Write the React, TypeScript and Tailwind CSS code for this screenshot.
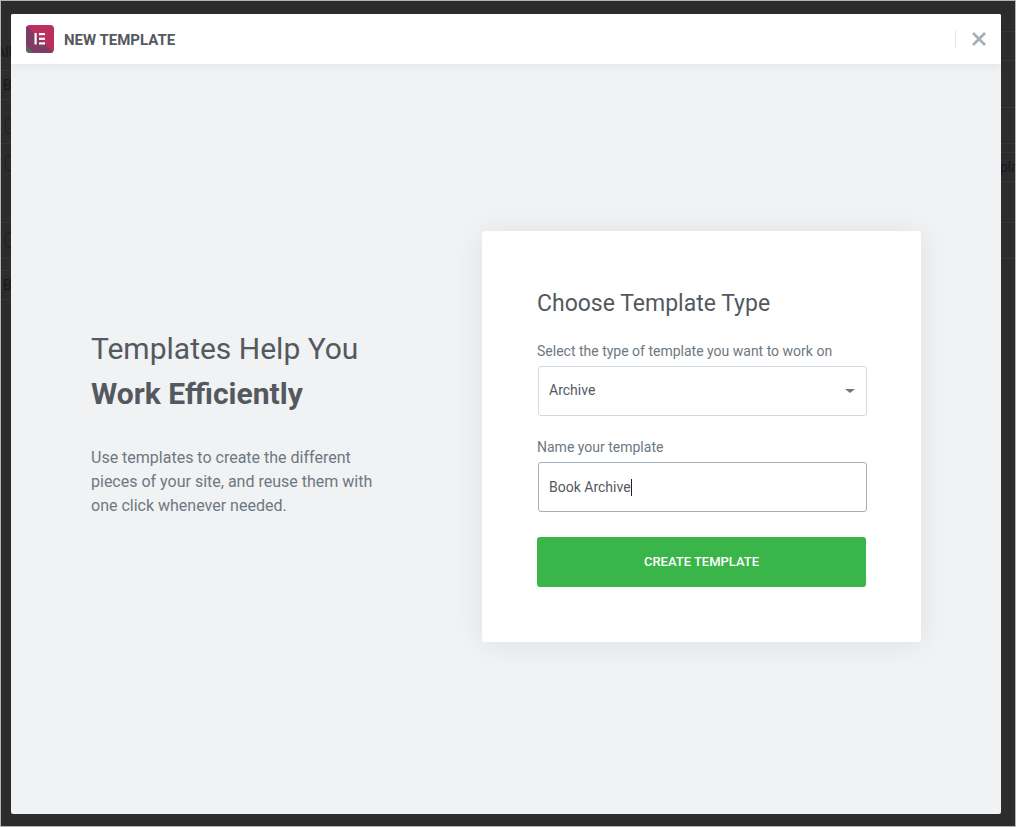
function Row({ h, line = "border-[#3d3226]", className = "", children }: { h: string; line?: string; className?: string; children?: React.ReactNode }) {
  return <div className={`${h} ${line} ${className} border-b flex shrink-0 whitespace-nowrap`}>{children}</div>;
}

function Check() {
  return <span className="block w-[16px] h-[16px] rounded-[3px] border border-[#1f1f1f]" />;
}

function Backdrop() {
  const soft = "border-[#353535]";
  return (
    <div aria-hidden="true" className="absolute inset-0 flex justify-between text-[#17181a] text-[14px]">
      <div className="w-[12px] overflow-hidden flex flex-col">
        <Row h="h-[70px]" className="items-end pb-[7px] -ml-[5px]">All</Row>
        <Row h="h-[29px]" className="items-center pl-[2px]">B</Row>
        <Row h="h-[44px]" line={soft} className="pt-[18px] pl-[4px]"><Check /></Row>
        <Row h="h-[79px]" line={soft} className="pt-[11px] pl-[4px]"><Check /></Row>
        <Row h="h-[36px]" line={soft} className="pt-[9px] pl-[4px]"><Check /></Row>
        <Row h="h-[12px]" />
        <Row h="h-[29px]" className="items-center pl-[2px]">B</Row>
      </div>
      <div className="w-[15px] overflow-hidden flex flex-col">
        <Row h="h-[31px]" />
        <Row h="h-[29px]" />
        <Row h="h-[47px]" line={soft} />
        <Row h="h-[36px]" line={soft} />
        <Row h="h-[9px]" />
        <Row h="h-[29px]" className="items-center">pla</Row>
        <Row h="h-[41px]" line={soft} />
        <Row h="h-[36px]" line={soft} />
      </div>
    </div>
  );
}

export default function App() {
  return (
    <div
      className="relative w-[1016px] h-[827px] overflow-hidden bg-[#2c2c2c] border border-[#b4b4b4] pt-[13px] pl-[10px]"
      style={{ fontFamily: "Roboto, sans-serif" }}
    >
      <Backdrop />
      <div className="relative w-[990px] h-[800px] flex flex-col bg-[#f1f2f4] rounded-[2px] overflow-hidden">
        <header className="h-[50px] shrink-0 flex items-center bg-white px-[15px] shadow-[0_2px_10px_rgba(0,0,0,0.06)] z-10">
          <svg width="28" height="28" viewBox="0 0 28 28" className="shrink-0 rounded-[4px]">
            <rect width="28" height="28" fill="#ba2f60" />
            <polygon points="0,0 28,28 5,28 0,23" fill="#7f3b63" />
            <polygon points="0,20 8,28 0,28" fill="#5d6069" />
            <rect x="8.5" y="8" width="2.2" height="11.5" fill="#fff" />
            <rect x="13" y="8" width="6" height="2.2" fill="#fff" />
            <rect x="13" y="12.7" width="6" height="2.2" fill="#fff" />
            <rect x="13" y="17.3" width="6" height="2.2" fill="#fff" />
          </svg>
          <h1 className="ml-[10px] pt-[2px] text-[15px] font-bold uppercase text-[#54595f] leading-none">New Template</h1>
          <div className="ml-auto h-[18px] w-px bg-[#e6e8ea]" />
          <svg width="14" height="14" viewBox="0 0 14 14" className="ml-[16px]">
            <path d="M1 1 L13 13 M13 1 L1 13" stroke="#a4afb7" strokeWidth="2.7" fill="none" />
          </svg>
        </header>
        <main className="flex-1 flex items-center">
          <section className="w-[471px] shrink-0 pl-[80px] pr-[100px] pb-[34px]">
            <h2 className="text-[30px] leading-[45px] font-normal text-[#54595f] whitespace-nowrap">Templates Help You</h2>
            <h2 className="text-[30px] leading-[45px] font-bold text-[#54595f] whitespace-nowrap">Work Efficiently</h2>
            <p className="mt-[30px] text-[16px] leading-[24px] text-[#6d7882] w-[300px]">
              Use templates to create the different pieces of your site, and reuse them with one click whenever needed.
            </p>
          </section>
          <section className="w-[439px] h-[411px] mb-[6px] bg-white rounded-[3px] shadow-[0_2px_30px_rgba(0,0,0,0.08)] pt-[56px] px-[55px]">
            <h3 className="text-[23px] leading-[33px] text-[#54595f] whitespace-nowrap">Choose Template Type</h3>
            <label className="block mt-[21px] text-[14px] leading-[21px] text-[#6d7882]">Select the type of template you want to work on</label>
            <div className="mt-[4px] ml-px w-[329px] h-[50px] flex items-center justify-between border border-[#d5dadf] rounded-[3px] pl-[10px] pr-[11px] text-[14px] text-[#54595f]">
              <span>Archive</span>
              <span className="w-0 h-0 border-l-[5px] border-r-[5px] border-t-[4px] border-l-transparent border-r-transparent border-t-[#6d7882]" />
            </div>
            <label className="block mt-[21px] text-[14px] leading-[21px] text-[#6d7882]">Name your template</label>
            <div className="mt-[4px] ml-px w-[329px] h-[50px] flex items-center pt-[1px] border border-[#a4afb7] rounded-[3px] pl-[10px] text-[14px] text-[#54595f]">
              <span>Book Archive</span>
              <span className="w-px h-[17px] bg-[#1f2124]" />
            </div>
            <button className="mt-[25px] w-[329px] h-[50px] pt-[1px] bg-[#39b54a] rounded-[3px] text-white text-[13px] font-medium uppercase">
              Create Template
            </button>
          </section>
        </main>
      </div>
    </div>
  );
}
